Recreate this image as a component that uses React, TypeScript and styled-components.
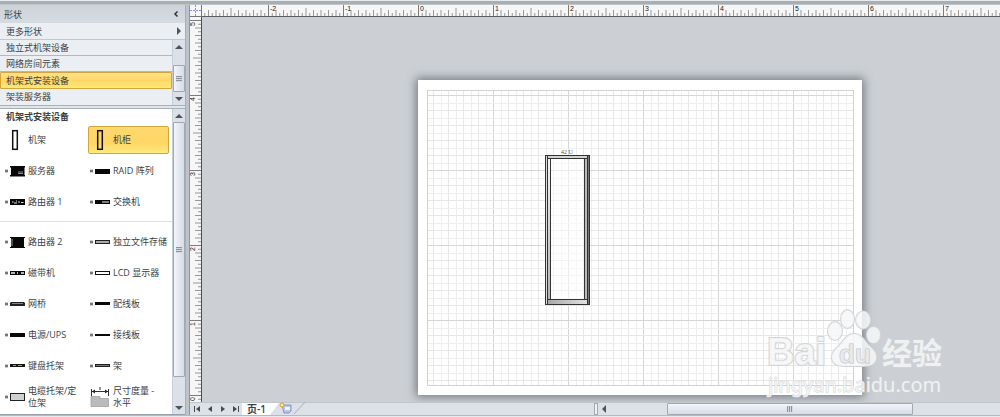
import React from "react";
import styled, { createGlobalStyle, css } from "styled-components";

const INCH = 75;
const H_ORIGIN = 216;
const V_ORIGIN = 378;

const GlobalStyle = createGlobalStyle`
  * { box-sizing: border-box; }
  body {
    margin: 0;
    font-family: "Open Sans", "Noto Sans CJK SC", sans-serif;
    font-size: 9px;
    color: #3b3f45;
    background: #e9eef2;
  }
  button {
    font: inherit;
    color: inherit;
    border: 0;
    padding: 0;
    margin: 0;
    background: none;
    text-align: left;
  }
`;

const Window = styled.div`
  display: flex;
  flex-direction: column;
  min-height: 100vh;
  background: #b9bec4;
`;

const RibbonEdge = styled.header`
  height: 5px;
  background: #a9aeb3;
  border-top: 1px solid #e6ebef;
  border-bottom: 1px solid #bfc4c8;
`;

const Workspace = styled.main`
  display: flex;
  flex: 1;
`;

const StatusEdge = styled.footer`
  height: 2px;
  background: #e6ebf0;
  border-top: 1px solid #b4bac1;
`;

const Sidebar = styled.aside`
  display: flex;
  flex-direction: column;
  width: 185px;
  flex: none;
  background: #dde2e9;
  border-bottom: 1px solid #9ba1a9;
`;

const Splitter = styled.div`
  width: 5px;
  flex: none;
  background: linear-gradient(90deg, #a9aeb5 0, #a9aeb5 1px, #bcc3ca 1px, #bcc3ca 4px, #8f959b 4px);
`;

const SidebarHeader = styled.div`
  display: flex;
  align-items: center;
  justify-content: space-between;
  height: 18px;
  padding: 0 6px 0 4px;
  background: linear-gradient(#cdd3d9, #d6dbe1);

  h2 { margin: 0; font-size: 9px; font-weight: 400; }
`;

const MoreShapes = styled.button`
  display: flex;
  align-items: center;
  justify-content: space-between;
  height: 17px;
  padding: 0 4px 0 6px;
  background: #ebeff4;
  border-bottom: 1px solid #c3c8ce;
`;

const StencilArea = styled.div`
  display: flex;
`;

const StencilList = styled.nav`
  flex: 1;
  display: flex;
  flex-direction: column;
  background: #ebeff4;
`;

const StencilButton = styled.button<{ $active?: boolean }>`
  height: 16px;
  padding: 0 6px;
  line-height: 14px;
  border-bottom: 1px solid #b3b8be;
  ${(p) =>
    p.$active &&
    css`
      height: 17px;
      padding: 0 5px;
      border: 1px solid #d3a63c;
      border-radius: 1px;
      background: linear-gradient(#ffe18a, #ffd767 50%, #ffe873);
    `}
  &:last-child { border-bottom-color: transparent; }
`;

const PaneDivider = styled.div`
  height: 4px;
  background: #e0e5ea;
  border-top: 1px solid #aab0b7;
  border-bottom: 1px solid #aab0b7;
`;

const ShapeArea = styled.div`
  display: flex;
  flex: 1;
`;

const ShapePanel = styled.section`
  flex: 1;
  background: #fff;

  h3 {
    margin: 0;
    padding: 0 6px;
    font-size: 9px;
    line-height: 15px;
    font-weight: 700;
  }
`;

const ShapeGrid = styled.div`
  display: grid;
  grid-template-columns: 85px 1fr;
  grid-auto-rows: 31px;
  align-items: center;
`;

const Separator = styled.hr`
  height: 1px;
  margin: 4px 0;
  border: 0;
  background: #dcdee1;
`;

const ShapeButton = styled.button<{ $active?: boolean }>`
  display: flex;
  align-items: center;
  height: 28px;
  margin: 0 3px;
  border: 1px solid transparent;
  border-radius: 2px;
  line-height: 12px;
  ${(p) =>
    p.$active &&
    css`
      border-color: #d3a63c;
      background: linear-gradient(#ffd86e, #ffd767 60%, #ffea7c);
    `}
  svg { flex: none; }
  span { white-space: pre; margin-right: -8px; }
`;

const ScrollTrack = styled.div`
  display: flex;
  flex-direction: column;
  align-items: center;
  width: 13px;
  padding: 5px 0 4px;
  background: #dce1e9;
  border-left: 1px solid #c8ced6;
`;

const ScrollThumb = styled.div`
  display: flex;
  align-items: center;
  justify-content: center;
  width: 12px;
  border: 1px solid #a2a8b3;
  border-radius: 1px;
  background: linear-gradient(90deg, #f2f5f9, #d6dce6);
`;

const ShortThumb = styled(ScrollThumb)`
  height: 27px;
  margin: auto 0 5px;
`;

const LongThumb = styled(ScrollThumb)`
  flex: 1;
  margin: 4px 0 29px;
`;

const Grip = styled.i<{ $vertical?: boolean }>`
  width: 6px;
  height: 6px;
  background: repeating-linear-gradient(
    ${(p) => (p.$vertical ? "90deg" : "180deg")},
    #8e949d 0, #8e949d 1px, #d4d9e1 1px, #d4d9e1 2px
  );
`;

const Arrow = styled.i<{ $dir: "up" | "down" | "left" | "right" }>`
  width: 0;
  height: 0;
  flex: none;
  border: 4px solid transparent;
  ${(p) => p.$dir === "up" && "border-top: 0; border-bottom-color: #4f545b;"}
  ${(p) => p.$dir === "down" && "border-bottom: 0; border-top-color: #4f545b;"}
  ${(p) => p.$dir === "left" && "border-left: 0; border-right-color: #4f545b;"}
  ${(p) => p.$dir === "right" && "border-right: 0; border-left-color: #4f545b;"}
`;

const Editor = styled.section`
  position: relative;
  display: grid;
  grid-template-columns: 12px 1fr;
  grid-template-rows: 12px 1fr 13px;
  flex: 1;
  min-width: 0;
`;

const RulerSvg = styled.svg`
  display: block;
  width: 100%;
  height: 100%;
  overflow: hidden;
  background: #f6f6f6;
`;

const VerticalRulerCell = styled.div`
  position: relative;
  overflow: hidden;

  svg { position: absolute; inset: 0; }
`;

const Canvas = styled.div`
  position: relative;
  overflow: hidden;
  background: #ccd0d4;
`;

const Sheet = styled.div`
  position: absolute;
  left: 216px;
  top: 63px;
  width: 444px;
  height: 315px;
  background: #fff;
  box-shadow: 0 0 9px 2px rgba(88, 93, 102, 0.75);

  svg { display: block; }
`;

const BottomBar = styled.div`
  grid-column: 1 / -1;
  display: flex;
  background: #dce1e8;
  border-top: 1px solid #bfc5cb;
`;

const PageTabs = styled.div`
  display: flex;
  align-items: center;
  flex: 404 1 0;
`;

const NavButton = styled.button`
  display: flex;
  width: 13px;
  justify-content: center;
`;

const PageTab = styled.button`
  height: 12px;
  width: 37px;
  padding-left: 5px;
  font-size: 10px;
  line-height: 11px;
  font-weight: 600;
  background: #fff;
  clip-path: polygon(0 0, 100% 0, 28px 100%, 0 100%);
`;

const HorizontalScroll = styled.div`
  display: flex;
  align-items: stretch;
  flex: 406 1 0;
`;

const SplitHandle = styled.div`
  width: 4px;
  border: 1px solid #a2a8b3;
  background: #eef1f5;
`;

const LeftCell = styled.div`
  display: flex;
  align-items: center;
  justify-content: center;
  width: 12px;
`;

const TrackSpace = styled.div<{ $grow: number }>`
  flex: ${(p) => p.$grow} 1 0;
`;

const WideThumb = styled(ScrollThumb)`
  flex: 244 1 0;
  background: linear-gradient(#f2f5f9, #d6dce6);
`;

const Watermark = styled.svg`
  position: absolute;
  left: 574px;
  top: 299px;
  pointer-events: none;
`;

/* Tick length grows at tenths, halves and whole inches. */
const tickLength = (i: number) => (i % 20 === 0 ? 12 : i % 10 === 0 ? 9 : i % 2 === 0 ? 7 : 4);

const range = (from: number, to: number) =>
  Array.from({ length: to - from + 1 }, (_, i) => from + i);

function HorizontalRuler() {
  return (
    <RulerSvg aria-label="水平标尺">
      {range(-57, 600).map((i) => (
        <rect
          key={i}
          x={H_ORIGIN + (i * INCH) / 20}
          y={12 - tickLength(i)}
          width="1"
          height={tickLength(i)}
          fill={i % 20 === 0 ? "#7c7c7c" : "#979797"}
        />
      ))}
      {range(-2, 7).map((n) => (
        <text key={n} x={H_ORIGIN + n * INCH + 2} y="6" fontSize="7" fill="#222" fontFamily="Liberation Sans, sans-serif">
          {n}
        </text>
      ))}
      <rect y="11" width="100%" height="1" fill="#5b5e61" />
    </RulerSvg>
  );
}

function VerticalRuler() {
  return (
    <VerticalRulerCell>
      <RulerSvg aria-label="垂直标尺">
        {range(-300, 100).map((i) => (
          <rect
            key={i}
            x={12 - tickLength(Math.abs(i))}
            y={V_ORIGIN - (i * INCH) / 20}
            width={tickLength(Math.abs(i))}
            height="1"
            fill={i % 20 === 0 ? "#7c7c7c" : "#979797"}
          />
        ))}
        {range(0, 5).map((n) => (
          <text
            key={n}
            transform={`translate(5 ${V_ORIGIN - n * INCH + 6}) rotate(-90)`}
            fontSize="7"
            fill="#222"
            fontFamily="Liberation Sans, sans-serif"
          >
            {n}
          </text>
        ))}
        <rect x="11" width="1" height="100%" fill="#4c4f52" />
      </RulerSvg>
    </VerticalRulerCell>
  );
}

const gridColor = (i: number) => (i % 10 === 0 ? "#d6d6d6" : i % 2 === 0 ? "#e7e7e7" : "#efefef");

function Drawing() {
  return (
    <svg width="444" height="315" aria-label="绘图页">
      <defs>
        <linearGradient id="postLeft" x1="0" x2="0" y1="0" y2="1">
          <stop offset="0" stopColor="#f4f4f4" />
          <stop offset="1" stopColor="#b4b4b4" />
        </linearGradient>
        <linearGradient id="base" x1="0" x2="1">
          <stop offset="0" stopColor="#a8a8a8" />
          <stop offset="1" stopColor="#e2e2e2" />
        </linearGradient>
      </defs>
      {range(2, 57).map((i) => (
        <rect key={`v${i}`} x={Math.round(i * 7.5)} y="10" width="1" height="295" fill={gridColor(i)} />
      ))}
      {range(2, 40).map((i) => (
        <rect key={`h${i}`} x="9" y={Math.round(315 - i * 7.5)} width="426" height="1" fill={gridColor(i)} />
      ))}
      <rect x="9.5" y="10.5" width="426" height="295" fill="none" stroke="#d2d2d2" />
      <text x="143" y="74" fontSize="6" fill="#555" fontFamily="Liberation Serif, serif">42 U</text>
      <rect x="133" y="79" width="33" height="140" fill="#fff" fillOpacity="0.5" />
      <g stroke="#333" strokeWidth="1">
        <rect x="127.5" y="75.5" width="2" height="149" fill="#ddd" />
        <rect x="129.5" y="78.5" width="3" height="141" fill="url(#postLeft)" />
        <rect x="166.5" y="78.5" width="3" height="141" fill="#bbb" />
        <rect x="169.5" y="75.5" width="2" height="149" fill="#777" />
        <rect x="129.5" y="75.5" width="40" height="3" fill="#d2d6d2" />
        <rect x="129.5" y="219.5" width="40" height="5" fill="url(#base)" />
      </g>
    </svg>
  );
}

type IconKind =
  | "frame" | "server" | "block" | "router" | "switch" | "router2" | "storage"
  | "tape" | "lcd" | "bridge" | "panel" | "ups" | "strip" | "tray" | "shelf" | "cable" | "dimension";

const glyphs: Record<IconKind, React.ReactNode> = {
  frame: <rect x="8.7" y="3.7" width="4.600" height="18.600" fill="none" stroke="#111" strokeWidth="1.500" />,
  server: (
    <>
      <path d="M6 8h15v1.500h-.5v7.500h.5v1.500H6V17h1V9.500H6z" fill="#080808" />
      <path d="M14 14h5M14 15.500h5" stroke="#aaa" strokeWidth=".8" />
    </>
  ),
  block: <rect x="6" y="11" width="15" height="5" fill="#080808" />,
  router: (
    <>
      <rect x="6" y="10" width="15" height="6" fill="#080808" />
      <path d="M8 13h1.500M10 14h3M14 13h2M17 13.500h2.500M12 12h1" stroke="#ddd" />
    </>
  ),
  switch: (
    <>
      <rect x="6" y="11" width="15" height="4" fill="#080808" />
      <path d="M13 13h7" stroke="#eee" />
    </>
  ),
  router2: (
    <>
      <path d="M6 8h15v1h-1v9h1v1H6v-1h1V9H6z" fill="#080808" />
      <path d="M8 10v7" stroke="#999" />
    </>
  ),
  storage: <rect x="6.5" y="11.5" width="14" height="3" fill="#aaa" stroke="#222" />,
  tape: (
    <>
      <rect x="6" y="11" width="15" height="4" fill="#080808" />
      <path d="M7 13h4M13 13h1M17 13h3" stroke="#eee" strokeWidth="1.500" />
    </>
  ),
  lcd: <rect x="6.5" y="11.5" width="14" height="3" fill="#fff" stroke="#111" />,
  bridge: (
    <>
      <path d="M7 11h13l1 1v3H6v-3z" fill="#222" />
      <path d="M8 12.500h11" stroke="#999" strokeWidth=".8" />
    </>
  ),
  panel: <rect x="6" y="11" width="15" height="3" fill="#080808" />,
  ups: <rect x="6" y="11" width="15" height="4" fill="#080808" />,
  strip: <rect x="6" y="12" width="15" height="2" fill="#080808" />,
  tray: (
    <>
      <rect x="6" y="11" width="15" height="3" fill="#151515" />
      <path d="M9 12.500h3M14 12.500h4" stroke="#999" />
    </>
  ),
  shelf: <rect x="6.5" y="11.5" width="14" height="2" fill="#777" stroke="#222" />,
  cable: <rect x="6.5" y="9.5" width="14" height="7" fill="#d0d0d0" stroke="#222" />,
  dimension: (
    <>
      <path d="M2.500 5v7M19.500 5v7M3 7.500h16" stroke="#333" fill="none" />
      <path d="M3 7.500l3-2v4zM19 7.500l-3-2v4zM10.500 3h1v3h-1z" fill="#222" />
      <path d="M2 22.500v-10h9v2h8.500v8z" fill="#bbb" stroke="#999" strokeWidth=".7" />
    </>
  ),
};

function ShapeIcon({ kind }: { kind: IconKind }) {
  const hasHandle = kind !== "frame" && kind !== "dimension";
  return (
    <svg width="24" height="26" aria-hidden="true">
      {hasHandle && <path d="M1 11.500h3v3H1z" fill="#999" />}
      {hasHandle && <path d="M1 13h3" stroke="#555" />}
      {glyphs[kind]}
    </svg>
  );
}

const stencils = ["独立式机架设备", "网络房间元素", "机架式安装设备", "架装服务器"];

const topShapes: [string, IconKind][] = [
  ["机架", "frame"],
  ["机柜", "frame"],
  ["服务器", "server"],
  ["RAID 阵列", "block"],
  ["路由器 1", "router"],
  ["交换机", "switch"],
];

const otherShapes: [string, IconKind][] = [
  ["路由器 2", "router2"],
  ["独立文件存储", "storage"],
  ["磁带机", "tape"],
  ["LCD 显示器", "lcd"],
  ["网桥", "bridge"],
  ["配线板", "panel"],
  ["电源/UPS", "ups"],
  ["接线板", "strip"],
  ["键盘托架", "tray"],
  ["架", "shelf"],
  ["电缆托架/定\n位架", "cable"],
  ["尺寸度量 -\n水平", "dimension"],
];

function Shapes({ items, selected }: { items: [string, IconKind][]; selected?: string }) {
  return (
    <ShapeGrid>
      {items.map(([name, kind]) => (
        <ShapeButton key={name} type="button" $active={name === selected}>
          <ShapeIcon kind={kind} />
          <span>{name}</span>
        </ShapeButton>
      ))}
    </ShapeGrid>
  );
}

function BaiduMark() {
  return (
    <Watermark width="190" height="100" aria-label="Baidu 经验 jingyan.baidu.com">
      <g fill="#f6f7f8" fillOpacity=".85" stroke="#d3d5d7" strokeWidth="2" strokeLinejoin="round" paintOrder="stroke">
        <text x="3" y="61" fontSize="38" fontWeight="700" fontFamily="Liberation Sans, sans-serif">Bai</text>
        <ellipse cx="71" cy="27" rx="7" ry="9" />
        <ellipse cx="83.500" cy="15" rx="6.500" ry="9" />
        <ellipse cx="99" cy="16" rx="7" ry="8.500" />
        <ellipse cx="109.500" cy="31" rx="6.500" ry="8" />
        <path d="M90 30c8 0 10 7 15 12 5 4 8 8 7 13-2 8-10 7-22 7s-20 1-22-7c-1-5 2-9 7-13 5-5 7-12 15-12z" />
        <text x="75" y="59" fontSize="26" fontWeight="700" fill="#e6e7e9" strokeWidth="1" stroke="#bfc2c5" fontFamily="Liberation Sans, sans-serif">du</text>
        <text x="118" y="60" fontSize="30" fontWeight="700" strokeWidth="1" fontFamily="Noto Sans CJK SC, sans-serif">经验</text>
        <text x="4" y="88" fontSize="20" strokeWidth="1" fontFamily="Noto Sans, sans-serif">jingyan.baidu.com</text>
      </g>
    </Watermark>
  );
}

export default function App() {
  return (
    <>
      <GlobalStyle />
      <Window>
        <RibbonEdge />
        <Workspace>
          <Sidebar>
            <SidebarHeader>
              <h2>形状</h2>
              <button type="button" aria-label="折叠">
                <svg width="6" height="8">
                  <path d="M4.500 1.500L2 4l2.500 2.500" fill="none" stroke="#333" strokeWidth="1.500" />
                </svg>
              </button>
            </SidebarHeader>
            <MoreShapes type="button">
              更多形状
              <Arrow $dir="right" />
            </MoreShapes>
            <StencilArea>
              <StencilList>
                {stencils.map((name) => (
                  <StencilButton key={name} type="button" $active={name === "机架式安装设备"}>
                    {name}
                  </StencilButton>
                ))}
              </StencilList>
              <ScrollTrack>
                <Arrow $dir="up" />
                <ShortThumb><Grip /></ShortThumb>
                <Arrow $dir="down" />
              </ScrollTrack>
            </StencilArea>
            <PaneDivider />
            <ShapeArea>
              <ShapePanel>
                <h3>机架式安装设备</h3>
                <Shapes items={topShapes} selected="机柜" />
                <Separator />
                <Shapes items={otherShapes} />
              </ShapePanel>
              <ScrollTrack>
                <Arrow $dir="up" />
                <LongThumb><Grip /></LongThumb>
                <Arrow $dir="down" />
              </ScrollTrack>
            </ShapeArea>
          </Sidebar>
          <Splitter />
          <Editor>
            <svg width="12" height="12" aria-hidden="true">
              <rect width="12" height="12" fill="#f6f6f6" />
              <path d="M5.500 0v11M0 5.500h11" stroke="#8c8cf5" strokeDasharray="2 1" />
              <path d="M0 11.500h12M11.500 0v12" stroke="#73777b" />
            </svg>
            <HorizontalRuler />
            <VerticalRuler />
            <Canvas>
              <Sheet>
                <Drawing />
              </Sheet>
            </Canvas>
            <BottomBar>
              <PageTabs>
                <NavButton type="button" aria-label="第一页">
                  <svg width="8" height="8"><path d="M1 1h1v6H1zM7 1v6L3 4z" fill="#454a52" /></svg>
                </NavButton>
                <NavButton type="button" aria-label="上一页">
                  <svg width="8" height="8"><path d="M6 1v6L2 4z" fill="#454a52" /></svg>
                </NavButton>
                <NavButton type="button" aria-label="下一页">
                  <svg width="8" height="8"><path d="M2 1v6l4-3z" fill="#454a52" /></svg>
                </NavButton>
                <NavButton type="button" aria-label="最后一页">
                  <svg width="8" height="8"><path d="M1 1v6l4-3zM6 1h1v6H6z" fill="#454a52" /></svg>
                </NavButton>
                <PageTab type="button">页-1</PageTab>
                <button type="button" aria-label="插入页">
                  <svg width="30" height="12">
                    <path d="M3 3h9v6l-2 2H5z" fill="#b9c8e8" stroke="#7486b4" strokeWidth=".8" />
                    <path d="M6 5h5v3H6z" fill="#eef3fc" />
                    <circle cx="3" cy="3" r="2" fill="#ffe9a8" stroke="#e29a2c" />
                    <path d="M15 12L26 0" stroke="#aab0b8" />
                  </svg>
                </button>
              </PageTabs>
              <HorizontalScroll>
                <SplitHandle />
                <LeftCell><Arrow $dir="left" /></LeftCell>
                <TrackSpace $grow={57} />
                <WideThumb><Grip $vertical /></WideThumb>
                <TrackSpace $grow={87} />
              </HorizontalScroll>
            </BottomBar>
            <BaiduMark />
          </Editor>
        </Workspace>
        <StatusEdge />
      </Window>
    </>
  );
}
